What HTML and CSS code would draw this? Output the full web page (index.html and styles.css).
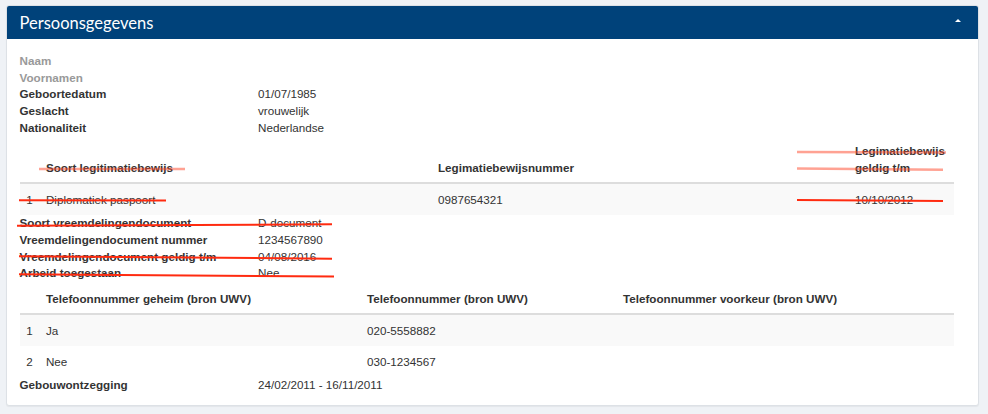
FILE: index.html
```html
<!DOCTYPE html>
<html lang="nl">
<head>
<meta charset="utf-8">
<title>Persoonsgegevens</title>
<link rel="stylesheet" href="styles.css">
</head>
<body>
<div class="page">
  <div class="panel">
    <div class="panel-heading">
      <h3 class="panel-title">Persoonsgegevens</h3>
      <span class="caret-up"></span>
    </div>
    <div class="panel-body">
      <dl class="dl">
        <dt class="muted">Naam</dt><dd></dd>
        <dt class="muted">Voornamen</dt><dd></dd>
        <dt>Geboortedatum</dt><dd>01/07/1985</dd>
        <dt>Geslacht</dt><dd>vrouwelijk</dd>
        <dt>Nationaliteit</dt><dd>Nederlandse</dd>
      </dl>
      <table class="table">
        <thead>
          <tr>
            <th class="c-idx"></th>
            <th class="t1-c2">Soort legitimatiebewijs</th>
            <th class="t1-c3">Legimatiebewijsnummer</th>
            <th class="t1-c4">Legimatiebewijs geldig t/m</th>
          </tr>
        </thead>
        <tbody>
          <tr>
            <td>1</td>
            <td>Diplomatiek paspoort</td>
            <td>0987654321</td>
            <td>10/10/2012</td>
          </tr>
        </tbody>
      </table>
      <dl class="dl">
        <dt>Soort vreemdelingendocument</dt><dd>D-document</dd>
        <dt>Vreemdelingendocument nummer</dt><dd>1234567890</dd>
        <dt>Vreemdelingendocument geldig t/m</dt><dd>04/08/2016</dd>
        <dt>Arbeid toegestaan</dt><dd>Nee</dd>
      </dl>
      <table class="table table-phone">
        <thead>
          <tr>
            <th class="c-idx"></th>
            <th class="t2-c2">Telefoonnummer geheim (bron UWV)</th>
            <th class="t2-c3">Telefoonnummer (bron UWV)</th>
            <th class="t2-c4">Telefoonnummer voorkeur (bron UWV)</th>
          </tr>
        </thead>
        <tbody>
          <tr>
            <td>1</td>
            <td>Ja</td>
            <td>020-5558882</td>
            <td></td>
          </tr>
          <tr>
            <td>2</td>
            <td>Nee</td>
            <td>030-1234567</td>
            <td></td>
          </tr>
        </tbody>
      </table>
      <dl class="dl">
        <dt>Gebouwontzegging</dt><dd>24/02/2011 - 16/11/2011</dd>
      </dl>
    </div>
  </div>
</div>
<svg class="annotations" width="988" height="414" viewBox="0 0 988 414" aria-hidden="true">
  <g class="mark-light">
    <line x1="39" y1="169" x2="185" y2="169"/>
    <line x1="797" y1="152" x2="946" y2="152.5"/>
    <line x1="797" y1="168.5" x2="943" y2="169.7"/>
  </g>
  <g class="mark">
    <line x1="19" y1="200.3" x2="166" y2="200.5"/>
    <line x1="797" y1="200" x2="943" y2="201"/>
    <line x1="17" y1="225.7" x2="332" y2="224.3"/>
    <line x1="19" y1="256.3" x2="332" y2="258.7"/>
    <line x1="19" y1="274.3" x2="334" y2="276.5"/>
  </g>
</svg>
</body>
</html>
```

FILE: styles.css
```css
* {
  box-sizing: border-box;
}

html, body {
  margin: 0;
  padding: 0;
}

body {
  position: relative;
  width: 988px;
  height: 414px;
  overflow: hidden;
  background: #eff2f6;
  font-family: "Liberation Sans", Arial, Helvetica, sans-serif;
  font-size: 11.67px;
  line-height: 16.67px;
  color: #333;
}

.page {
  padding: 5px 9px 0 6px;
}

.panel {
  background: #fff;
  border: 1px solid #dde1e6;
  border-radius: 3px;
  box-shadow: 0 1px 1px rgba(0, 0, 0, 0.05);
  overflow: hidden;
}

.panel-heading {
  display: flex;
  align-items: center;
  justify-content: space-between;
  height: 33px;
  padding: 0 17px 0 12.5px;
  background: #00427a;
  color: #fff;
}

.panel-title {
  margin: 0;
  font-family: Lato, "Liberation Sans", sans-serif;
  font-weight: 400;
  font-size: 16.5px;
  line-height: 20px;
}

.caret-up {
  width: 0;
  height: 0;
  border-left: 3px solid transparent;
  border-right: 3px solid transparent;
  border-bottom: 3px solid #fff;
  margin-top: -4px;
}

.panel-body {
  padding: 14px 12.5px 11px;
}

.dl {
  display: grid;
  grid-template-columns: 238.5px auto;
  margin: 0;
}

.dl dt {
  font-weight: bold;
}

.dl dd {
  margin: 0;
}

.dl .muted {
  color: #999;
}

.table {
  width: 934px;
  table-layout: fixed;
  border-collapse: collapse;
  border-spacing: 0;
}

.table th {
  text-align: left;
  font-weight: bold;
  vertical-align: bottom;
  padding: 6.67px 6.67px 6px;
  border-bottom: 2px solid #ddd;
}

.table td {
  padding: 7.5px 6.67px 6.67px;
  vertical-align: top;
}

.table tbody tr:nth-child(odd) td {
  background: #f9f9f9;
}

.table-phone {
  margin-top: 2px;
}

.table-phone th {
  padding-top: 7px;
  padding-bottom: 5.67px;
}

.c-idx { width: 19.8px; }
.t1-c2 { width: 392px; }
.t1-c3 { width: 417px; }
.t1-c4 { width: 105.2px; }
.t2-c2 { width: 321px; }
.t2-c3 { width: 256px; }
.t2-c4 { width: 337.2px; }

.annotations {
  position: absolute;
  top: 0;
  left: 0;
  pointer-events: none;
}

.mark-light line {
  stroke: rgba(255, 70, 40, 0.5);
  stroke-width: 2.5;
}

.mark line {
  stroke: #ff2b10;
  stroke-width: 2;
}
```
